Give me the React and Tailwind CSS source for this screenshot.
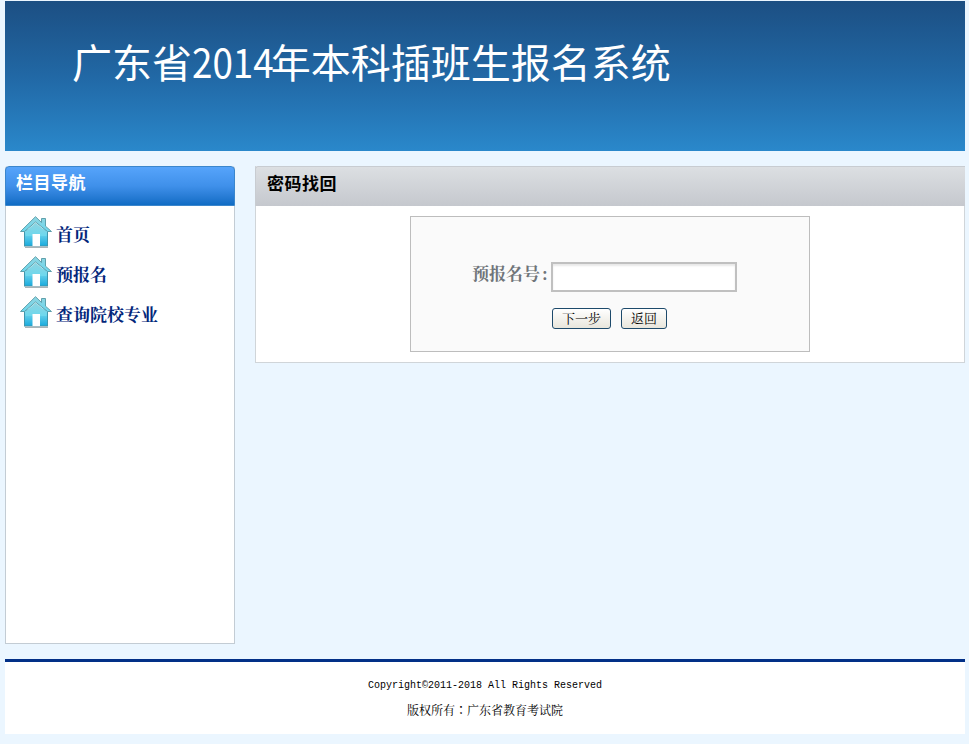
const CJK = "font-['Noto_Sans_CJK_SC',sans-serif]";
const SERIF = "font-['Noto_Serif_CJK_SC','Noto_Sans_CJK_SC',serif]";

const NAV = ['首页', '预报名', '查询院校专业'];

function HomeIcon() {
  return (
    <svg width="32" height="32" viewBox="0 0 32 32" className="shrink-0">
      <defs>
        <linearGradient id="roof" x1="0" y1="0" x2="0" y2="1">
          <stop offset="0" stopColor="#8fd4e0" />
          <stop offset="1" stopColor="#6cd8ee" />
        </linearGradient>
        <linearGradient id="wall" x1="0" y1="0" x2="0" y2="1">
          <stop offset="0" stopColor="#86e0f0" />
          <stop offset="1" stopColor="#18aadd" />
        </linearGradient>
      </defs>
      <rect x="4.5" y="14" width="23" height="16" fill="url(#wall)" stroke="#3f96ad" />
      <path d="M0.5 15.5 L15.5 0.7 L21.5 6.5 L21.5 2.5 L25.5 2.5 L25.5 10.2 L31.5 15.5 L27.5 15.5 L15.5 6 L4.5 15.5 Z" fill="url(#roof)" stroke="#5fa0ac" />
      <path d="M5.5 15.5 L15.5 6.8 L26.5 15.5 L26.5 20 L5.5 20 Z" fill="url(#roof)" />
      <rect x="12.5" y="18" width="7.5" height="12" fill="#ffffff" />
      <rect x="5" y="30.5" width="23" height="1.5" fill="#aab4b8" />
    </svg>
  );
}

export default function App() {
  return (
    <div className={`min-h-[744px] bg-[#ebf6ff] pt-px pl-[5px] pr-1 ${CJK}`}>
      {/* banner */}
      <div className="h-[150px] pl-[67px] pt-[36px] bg-gradient-to-b from-[#1c4f83] via-[#2168a5] to-[#2a88cb]">
        <h1 className="text-[40px] leading-[48px] font-normal text-white whitespace-nowrap">
          广东省<span className="inline-block origin-left scale-x-[0.92] mr-[-10px]">2014</span>年本科插班生报名系统
        </h1>
      </div>

      <div className="flex gap-5 mt-[15px]">
        {/* sidebar */}
        <div className="w-[230px] h-[478px] bg-white border border-t-0 border-[#c3ccd4] rounded-t-[3px]">
          <div className="-mx-px h-10 pl-[10px] pb-[9px] flex items-center rounded-t-[4px] border border-[#3b86cc] bg-gradient-to-b from-[#56a4fb] via-[#3f90ea] to-[#0f6cc4]">
            <span className="text-[17px] tracking-[0.5px] font-bold text-white leading-none">栏目导航</span>
          </div>
          <ul className="pt-[10px] pl-[14px]">
            {NAV.map(label => (
              <li key={label} className="h-10 flex items-start gap-1">
                <HomeIcon />
                <a className={`text-[17px] leading-[36px] font-bold text-[#02267a] ${SERIF}`}>{label}</a>
              </li>
            ))}
          </ul>
        </div>

        {/* panel */}
        <div className="w-[710px] h-[197px] bg-white border border-t-0 border-[#d0d5d9]">
          <div className="-mx-px h-10 pl-[11px] pb-[9px] flex items-center rounded-tl-[3px] border-t border-l border-[#c8ccd1] bg-gradient-to-b from-[#dcdfe2] to-[#c5c8ce]">
            <span className="text-[17px] tracking-[0.5px] font-bold text-black leading-none">密码找回</span>
          </div>
          <div className="w-[400px] h-[136px] mt-[10px] ml-[154px] bg-[#fafafa] border border-[#bdbdbd]">
            <div className="flex items-start pt-[45px] pl-[61px]">
              <label className={`w-[79px] text-[17px] font-bold text-[#6f7479] leading-[22px] ${SERIF}`}>预报名号<span className="ml-[2px]">:</span></label>
              <input className="w-[186px] h-[30px] bg-white border-2 border-[#c0c0c0] outline-none shadow-[inset_0_2px_2px_#e8e8e8]" />
            </div>
            <div className="flex gap-[10px] mt-4 ml-[141px]">
              <button className={`w-[59px] h-[21px] pb-0.5 text-[13px] leading-none text-black rounded-[3px] border border-[#1d4a6b] bg-gradient-to-b from-white to-[#e8e6dc] ${SERIF}`}>下一步</button>
              <button className={`w-[46px] h-[21px] pb-0.5 text-[13px] leading-none text-black rounded-[3px] border border-[#1d4a6b] bg-gradient-to-b from-white to-[#e8e6dc] ${SERIF}`}>返回</button>
            </div>
          </div>
        </div>
      </div>

      {/* footer */}
      <footer className="mt-[15px] h-[75px] bg-white border-t-[3px] border-[#023087] flex flex-col items-center pt-[17px] text-xs text-black">
        <p className="font-['Liberation_Mono',monospace] text-[10px] leading-[14px]">Copyright©2011-2018 All Rights Reserved</p>
        <p className={`mt-[10px] leading-[14px] ${SERIF}`}>版权所有<span className="font-['Noto_Sans_CJK_TC',sans-serif]">：</span>广东省教育考试院</p>
      </footer>
    </div>
  );
}
